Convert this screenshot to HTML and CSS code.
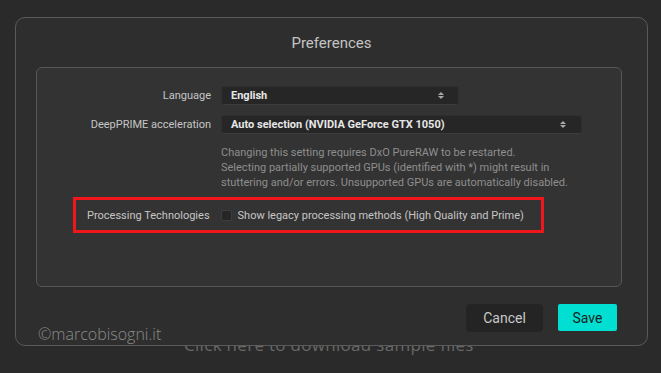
FILE: index.html
```html
<!DOCTYPE html>
<html>
<head>
<meta charset="utf-8">
<link rel="stylesheet" href="styles.css">
</head>
<body>
<div class="behind">Click here to download sample files</div>
<div class="dialog">
  <div class="title"><span class="title-text">Preferences</span></div>
  <div class="panel">
    <div class="row">
      <div class="label">Language</div>
      <div class="select sel-lang"><span>English</span><span class="arrows"><i class="up"></i><i class="down"></i></span></div>
    </div>
    <div class="row row2">
      <div class="label">DeepPRIME acceleration</div>
      <div class="select sel-gpu"><span>Auto selection (NVIDIA GeForce GTX 1050)</span><span class="arrows"><i class="up"></i><i class="down"></i></span></div>
    </div>
    <div class="help">Changing this setting requires DxO PureRAW to be restarted.<br>Selecting partially supported GPUs (identified with *) might result in<br>stuttering and/or errors. Unsupported GPUs are automatically disabled.</div>
    <div class="highlight">
      <div class="plabel">Processing Technologies</div>
      <div class="checkbox"></div>
      <div class="ctext">Show legacy processing methods (High Quality and Prime)</div>
    </div>
  </div>
  <div class="buttons">
    <div class="btn cancel">Cancel</div>
    <div class="btn save">Save</div>
  </div>
</div>
<div class="watermark">©marcobisogni.it</div>
</body>
</html>
```
FILE: styles.css
```css
html, body {
  margin: 0;
  padding: 0;
}
body {
  background: #2a2a2a;
  font-family: Roboto, "Noto Sans", sans-serif;
  width: 661px;
  height: 373px;
  overflow: hidden;
  position: relative;
  padding-top: 17px;
  box-sizing: border-box;
}
.behind {
  position: absolute;
  left: 184px;
  top: 333px;
  font-family: "Open Sans", sans-serif;
  font-size: 17px;
  letter-spacing: 0.3px;
  color: #686868;
  z-index: 0;
}
.dialog {
  position: relative;
  z-index: 1;
  margin-left: 15px;
  width: 633px;
  height: 329px;
  box-sizing: border-box;
  border: 1px solid #5a5a5a;
  border-radius: 10px;
  background: #2e2e2e;
  display: flex;
  flex-direction: column;
}
.title {
  height: 49px;
  display: flex;
  align-items: center;
  justify-content: center;
}
.title-text {
  font-size: 15px;
  color: #c4c4c4;
}
.panel {
  margin: 0 25px 0 20px;
  height: 220px;
  box-sizing: border-box;
  border: 1px solid #575757;
  border-radius: 6px;
  background: #333333;
  padding-top: 18px;
}
.row {
  display: flex;
  align-items: center;
  height: 19px;
}
.row2 {
  margin-top: 10px;
}
.label {
  width: 174px;
  text-align: right;
  font-size: 11px;
  color: #c6c6c6;
  margin-right: 10px;
}
.select {
  height: 19px;
  box-sizing: border-box;
  background: #262626;
  border: 1px solid #2f2f2f;
  border-bottom-color: #3c3c3c;
  border-radius: 3px;
  display: flex;
  align-items: center;
  justify-content: space-between;
  padding: 0 14px 0 9px;
  font-size: 11px;
  font-weight: bold;
  color: #e6e6e6;
}
.sel-lang {
  width: 238px;
}
.sel-gpu {
  width: 361px;
  padding-right: 15px;
}
.arrows {
  display: flex;
  flex-direction: column;
  gap: 1px;
}
.arrows i {
  display: block;
  width: 0;
  height: 0;
  border-left: 3px solid transparent;
  border-right: 3px solid transparent;
}
.arrows .up {
  border-bottom: 3px solid #a8a8a8;
}
.arrows .down {
  border-top: 3px solid #a8a8a8;
}
.help {
  margin: 11px 0 0 184px;
  font-size: 11px;
  line-height: 15px;
  color: #8e8e8e;
  white-space: nowrap;
}
.highlight {
  margin: 7px 0 0 36px;
  width: 471px;
  height: 36px;
  box-sizing: border-box;
  border: 3px solid #f0161c;
  display: flex;
  align-items: center;
  padding-left: 11px;
  font-size: 11px;
  color: #c6c6c6;
}
.checkbox {
  width: 11px;
  height: 11px;
  box-sizing: border-box;
  background: #262626;
  border: 1px solid #3e3e3e;
  border-radius: 2px;
  margin: 0 6px 0 11px;
}
.buttons {
  display: flex;
  justify-content: flex-end;
  align-items: flex-start;
  gap: 15px;
  padding-right: 30px;
  margin-top: 17px;
}
.btn {
  display: flex;
  align-items: center;
  justify-content: center;
  font-size: 14px;
  border-radius: 4px;
}
.cancel {
  width: 77px;
  height: 28px;
  background: #242424;
  color: #c8c8c8;
}
.save {
  width: 59px;
  height: 27px;
  background: #00dfd2;
  color: #1c1c1c;
  border-radius: 2px;
}
.watermark {
  position: absolute;
  left: 38px;
  top: 323px;
  z-index: 2;
  font-family: "Open Sans", sans-serif;
  font-size: 16px;
  font-weight: 300;
  color: rgba(255, 255, 255, 0.45);
}
```
